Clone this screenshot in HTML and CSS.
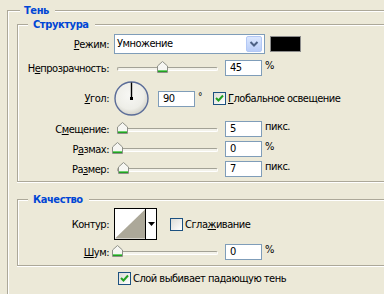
FILE: index.html
```html
<!DOCTYPE html>
<html lang="ru">
<head>
    <meta charset="UTF-8">
    <meta name="viewport" content="width=device-width, initial-scale=1.0">
    <title>Тень</title>
    <link rel="stylesheet" href="styles.css">
</head>
<body>
    <div class="group outer">
        <span class="group-title outer-title">Тень</span>

        <div class="group inner structure">
            <span class="group-title">Структура</span>

            <div class="row row-mode">
                <span class="lbl"><u>Р</u>ежим:</span>
                <div class="combo">
                    <span class="combo-text">Умножение</span>
                    <span class="combo-btn">
                        <svg width="14" height="14" viewBox="0 0 14 14"><path d="M3.5 5 L7 8.5 L10.5 5" fill="none" stroke="#4d6185" stroke-width="2"/></svg>
                    </span>
                </div>
                <span class="swatch"></span>
            </div>

            <div class="row row-opacity">
                <span class="lbl">Н<u>е</u>прозрачность:</span>
                <div class="slider">
                    <div class="rail">
                        <svg class="thumb" style="left: 45%" width="11" height="12" viewBox="0 0 11 12"><path d="M0.5 5 L5.5 0.5 L10.5 5 V11.5 H0.5 Z" fill="#f6f6f2" stroke="#8e9088"/><path d="M1 9.5 H10" stroke="#6ccf6c"/><path d="M1 10.5 H10" stroke="#21a121"/></svg>
                    </div>
                </div>
                <span class="field">45</span>
                <span class="unit">%</span>
            </div>

            <div class="row row-angle">
                <span class="lbl"><u>У</u>гол:</span>
                <svg class="dial" width="35" height="35" viewBox="0 0 35 35">
                    <defs>
                        <radialGradient id="dialFill" cx="45%" cy="40%" r="60%">
                            <stop offset="0" stop-color="#f7f7f4"/>
                            <stop offset="0.7" stop-color="#eeeee8"/>
                            <stop offset="1" stop-color="#d4d3ca"/>
                        </radialGradient>
                    </defs>
                    <circle cx="17.5" cy="17.5" r="16.5" fill="url(#dialFill)" stroke="#5a6c98" stroke-width="1.4"/>
                    <path d="M17.5 1.5 V17.5" stroke="#000" stroke-width="1.4"/>
                    <rect x="16" y="16" width="3" height="3" fill="#000"/>
                </svg>
                <span class="field">90</span>
                <span class="deg">°</span>
                <span class="check checked">
                    <svg width="11" height="11" viewBox="0 0 11 11"><path d="M2 5 L4.5 7.5 L9 2.5" fill="none" stroke="#21a121" stroke-width="2"/></svg>
                </span>
                <span class="check-text"><u>Г</u>лобальное освещение</span>
            </div>

            <div class="row row-tight first-tight">
                <span class="lbl">С<u>м</u>ещение:</span>
                <div class="slider">
                    <div class="rail">
                        <svg class="thumb" style="left: 5%" width="11" height="12" viewBox="0 0 11 12"><path d="M0.5 5 L5.5 0.5 L10.5 5 V11.5 H0.5 Z" fill="#f6f6f2" stroke="#8e9088"/><path d="M1 9.5 H10" stroke="#6ccf6c"/><path d="M1 10.5 H10" stroke="#21a121"/></svg>
                    </div>
                </div>
                <span class="field">5</span>
                <span class="unit">пикс.</span>
            </div>

            <div class="row row-tight">
                <span class="lbl">Р<u>а</u>змах:</span>
                <div class="slider">
                    <div class="rail">
                        <svg class="thumb" style="left: 0%" width="11" height="12" viewBox="0 0 11 12"><path d="M0.5 5 L5.5 0.5 L10.5 5 V11.5 H0.5 Z" fill="#f6f6f2" stroke="#8e9088"/><path d="M1 9.5 H10" stroke="#6ccf6c"/><path d="M1 10.5 H10" stroke="#21a121"/></svg>
                    </div>
                </div>
                <span class="field">0</span>
                <span class="unit">%</span>
            </div>

            <div class="row row-tight">
                <span class="lbl">Ра<u>з</u>мер:</span>
                <div class="slider">
                    <div class="rail">
                        <svg class="thumb" style="left: 6%" width="11" height="12" viewBox="0 0 11 12"><path d="M0.5 5 L5.5 0.5 L10.5 5 V11.5 H0.5 Z" fill="#f6f6f2" stroke="#8e9088"/><path d="M1 9.5 H10" stroke="#6ccf6c"/><path d="M1 10.5 H10" stroke="#21a121"/></svg>
                    </div>
                </div>
                <span class="field">7</span>
                <span class="unit">пикс.</span>
            </div>
        </div>

        <div class="group inner quality">
            <span class="group-title">Качество</span>

            <div class="row row-contour">
                <span class="lbl">Контур:</span>
                <div class="contour">
                    <svg class="contour-preview" width="31" height="30" viewBox="0 0 31 30"><rect width="31" height="30" fill="#fff"/><polygon points="0,30 31,0 31,30" fill="#aca899"/></svg>
                    <span class="contour-btn">
                        <svg width="7" height="4" viewBox="0 0 7 4"><polygon points="0,0 7,0 3.5,4" fill="#000"/></svg>
                    </span>
                </div>
                <span class="check contour-check"></span>
                <span class="check-text">Сгла<u>ж</u>ивание</span>
            </div>

            <div class="row row-noise">
                <span class="lbl"><u>Ш</u>ум:</span>
                <div class="slider">
                    <div class="rail">
                        <svg class="thumb" style="left: 0%" width="11" height="12" viewBox="0 0 11 12"><path d="M0.5 5 L5.5 0.5 L10.5 5 V11.5 H0.5 Z" fill="#f6f6f2" stroke="#8e9088"/><path d="M1 9.5 H10" stroke="#6ccf6c"/><path d="M1 10.5 H10" stroke="#21a121"/></svg>
                    </div>
                </div>
                <span class="field">0</span>
                <span class="unit">%</span>
            </div>
        </div>

        <div class="row row-knock">
            <span class="check checked">
                <svg width="11" height="11" viewBox="0 0 11 11"><path d="M2 5 L4.5 7.5 L9 2.5" fill="none" stroke="#21a121" stroke-width="2"/></svg>
            </span>
            <span class="check-text">Слой выбивает падающую тень</span>
        </div>
    </div>
</body>
</html>
```

FILE: styles.css
```css
:root {
    --xp-bg: #ece9d8;
    --etch-dark: #aca899;
    --etch-light: #fff;
    --title-blue: #0046d5;
    --field-border: #7f9db9;
}

* {
    margin: 0;
    padding: 0;
    box-sizing: border-box;
}

body {
    margin: 0;
    width: 384px;
    height: 294px;
    overflow: hidden;
    background: var(--xp-bg);
    color: #000;
    font-family: 'DejaVu Sans Condensed', 'DejaVu Sans', sans-serif;
    font-size: 11px;
    line-height: 13px;
    letter-spacing: -0.5px;
}

u {
    text-decoration: underline;
    text-underline-offset: 1px;
}

/* Etched group boxes (the dialog is cropped, so no right edge shows) */
.group {
    position: relative;
    border: 1px solid var(--etch-dark);
    border-right: none;
    box-shadow:
        inset 1px 1px 0 var(--etch-light),
        0 1px 0 var(--etch-light);
}

.group-title {
    position: absolute;
    top: -7px;
    left: 10px;
    padding: 0 6px 0 5px;
    background: var(--xp-bg);
    color: var(--title-blue);
    font-weight: bold;
    line-height: 13px;
    letter-spacing: -0.4px;
}

.outer {
    width: 377px;
    height: 284px;
    margin: 10px 0 0 7px;
    border-bottom: none;
}

.outer-title {
    left: 12px;
    padding: 0 6px 0 4px;
}

.inner {
    width: 367px;
    margin-left: 9px;
}

.structure {
    margin-top: 13px;
    padding: 9px 0 4px;
}

.quality {
    margin-top: 17px;
    padding: 8px 0 5px;
}

/* Rows */
.row {
    display: flex;
    align-items: center;
}

.lbl {
    width: 91px;
    margin-right: 5px;
    text-align: right;
    white-space: nowrap;
}

.row-opacity { margin-top: 6px; }
.row-angle { margin-top: 5px; }
.row-tight { margin-top: 4px; }
.first-tight { margin-top: 5px; }
.row-noise { margin-top: 4px; }

/* Combo box */
.combo {
    display: flex;
    width: 151px;
    height: 20px;
    background: #fff;
    border: 1px solid var(--field-border);
}

.combo-text {
    flex: 1;
    padding-left: 2px;
    line-height: 18px;
}

.combo-btn {
    display: flex;
    justify-content: center;
    align-items: center;
    width: 16px;
    height: 16px;
    margin: 1px 2px 1px 0;
    border: 1px solid #b3c8f5;
    border-radius: 2px;
    background: linear-gradient(#dbe7fe, #b9cdf8);
}

.swatch {
    width: 31px;
    height: 16px;
    margin-left: 5px;
    background: #000;
    border: 1px solid #8c8c8c;
}

/* Sliders */
.slider {
    display: flex;
    align-items: center;
    width: 107px;
    height: 16px;
    padding: 0 3px;
}

.rail {
    position: relative;
    width: 101px;
    height: 4px;
    margin-top: 2px;
    border: 1px solid;
    border-color: #a3a296 #fff #fff #a3a296;
    border-radius: 2px;
    background: #f3f2ea;
}

.thumb {
    position: absolute;
    top: -7px;
    margin-left: -6px;
}

/* Text fields */
.field {
    width: 37px;
    height: 16px;
    margin-left: 4px;
    padding-left: 4px;
    background: #fff;
    border: 1px solid var(--field-border);
    line-height: 14px;
}

.unit {
    align-self: flex-start;
    margin-left: 3px;
    margin-top: -1px;
}

/* Angle */
.dial {
    margin-right: 5px;
}

.deg {
    align-self: flex-start;
    margin: 9px 0 0 3px;
    font-size: 10px;
}

/* Checkboxes */
.check {
    display: flex;
    justify-content: center;
    align-items: center;
    width: 13px;
    height: 13px;
    border: 1px solid #1c5180;
    background: linear-gradient(135deg, #dcdcd7, #fff);
}

.row-angle .check {
    margin-left: 11px;
}

.check-text {
    margin-left: 2px;
    white-space: nowrap;
}

/* Contour picker */
.contour {
    display: flex;
    height: 32px;
    border: 1px solid #000;
    background: #fff;
}

.contour-preview {
    display: block;
    border-right: 1px solid #000;
}

.contour-btn {
    display: flex;
    justify-content: center;
    align-items: center;
    width: 10px;
    padding-bottom: 1px;
}

.contour-check {
    margin-left: 13px;
}

.row-knock {
    margin: 6px 0 0 110px;
}
```
